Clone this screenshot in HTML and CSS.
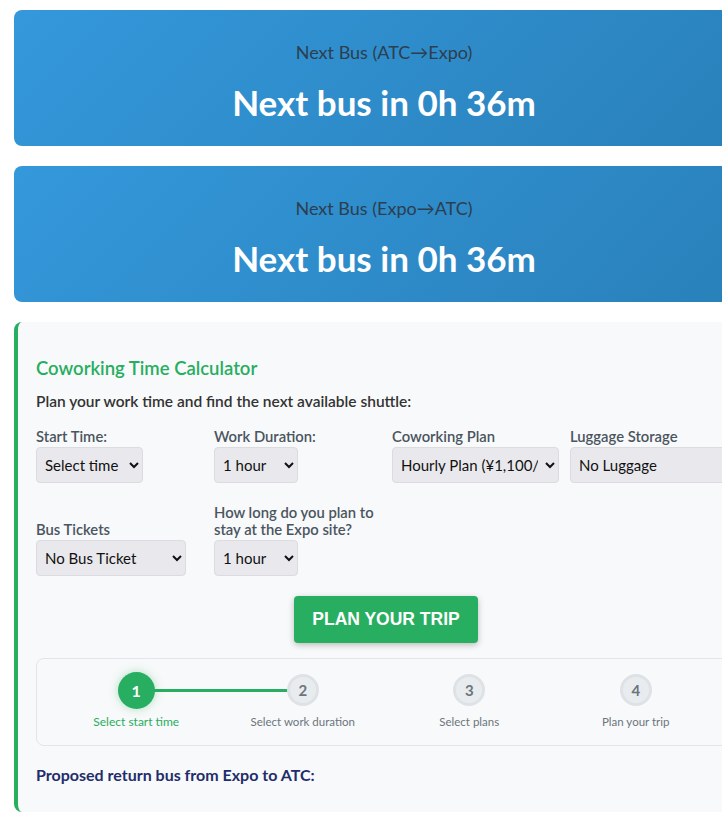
FILE: index.html
```html
<!DOCTYPE html>
<html lang="en">
<head>
<meta charset="utf-8">
<title>Expo Shuttle</title>
<link rel="stylesheet" href="styles.css">
</head>
<body>
<div class="container">
  <section class="bus-card">
    <div class="bus-title">Next Bus (ATC→Expo)</div>
    <div class="bus-time">Next bus in 0h 36m</div>
  </section>
  <section class="bus-card">
    <div class="bus-title">Next Bus (Expo→ATC)</div>
    <div class="bus-time">Next bus in 0h 36m</div>
  </section>

  <section class="calc-card">
    <h3 class="calc-title">Coworking Time Calculator</h3>
    <p class="calc-sub">Plan your work time and find the next available shuttle:</p>

    <div class="form-grid">
      <div class="field">
        <label class="field-label">Start Time:</label>
        <select class="sel w-time"><option>Select time</option></select>
      </div>
      <div class="field">
        <label class="field-label">Work Duration:</label>
        <select class="sel w-hour"><option>1 hour</option></select>
      </div>
      <div class="field">
        <label class="field-label">Coworking Plan</label>
        <select class="sel w-full"><option>Hourly Plan (¥1,100/hour)</option></select>
      </div>
      <div class="field">
        <label class="field-label">Luggage Storage</label>
        <select class="sel w-full"><option>No Luggage</option><option>Small Luggage Storage (¥500)</option></select>
      </div>
      <div class="field">
        <label class="field-label">Bus Tickets</label>
        <select class="sel w-ticket"><option>No Bus Ticket</option></select>
      </div>
      <div class="field">
        <label class="field-label">How long do you plan to stay at the Expo site?</label>
        <select class="sel w-hour"><option>1 hour</option></select>
      </div>
    </div>

    <div class="btn-row">
      <button class="plan-btn">PLAN YOUR TRIP</button>
    </div>

    <div class="steps">
      <div class="step active">
        <div class="connector"></div>
        <div class="circle">1</div>
        <div class="step-label">Select start time</div>
      </div>
      <div class="step">
        <div class="circle">2</div>
        <div class="step-label">Select work duration</div>
      </div>
      <div class="step">
        <div class="circle">3</div>
        <div class="step-label">Select plans</div>
      </div>
      <div class="step">
        <div class="circle">4</div>
        <div class="step-label">Plan your trip</div>
      </div>
    </div>

    <div class="return-title">Proposed return bus from Expo to ATC:</div>
  </section>
</div>
</body>
</html>
```

FILE: styles.css
```css
html, body {
  overflow: hidden;
}
body {
  margin: 0;
  background: #ffffff;
  font-family: "Lato", "Noto Sans", sans-serif;
  color: #333;
}
.container {
  width: 740px;
  padding: 10px 14px;
  display: flex;
  flex-direction: column;
  gap: 20px;
}
.bus-card {
  background: linear-gradient(135deg, #3498db 0%, #2980b9 100%);
  border-radius: 8px;
  padding: 30px 20px 24px;
  text-align: center;
  height: 136px;
  box-sizing: border-box;
}
.bus-title {
  font-size: 18px;
  line-height: 24px;
  color: #2c3e50;
}
.bus-time {
  margin-top: 18px;
  font-size: 35px;
  line-height: 40px;
  font-weight: 700;
  color: #ffffff;
}
.calc-card {
  background: #f8f9fa;
  border-left: 4px solid #27ae60;
  border-radius: 8px;
  padding: 34px 18px 26px;
}
.calc-title {
  margin: 0;
  font-size: 18.5px;
  line-height: 24px;
  font-weight: 600;
  color: #27ae60;
}
.calc-sub {
  margin: 10px 0 0;
  font-size: 15.5px;
  line-height: 22px;
  font-weight: 600;
  color: #333;
}
.form-grid {
  margin-top: 16px;
  display: grid;
  grid-template-columns: repeat(4, 166px);
  column-gap: 12px;
  row-gap: 21px;
  align-items: end;
}
.field {
  display: flex;
  flex-direction: column;
  align-items: flex-start;
}
.field-label {
  font-size: 14.8px;
  line-height: 17px;
  font-weight: 600;
  color: #4a5560;
  margin-bottom: 2px;
}
.sel {
  height: 36px;
  font-family: inherit;
  font-size: 15px;
  color: #111;
  background-color: #e9e9ed;
  border: 1px solid #dcdce0;
  border-radius: 4px;
  padding: 0 4px;
}
.w-time { width: 107px; }
.w-hour { width: 84px; }
.w-ticket { width: 150px; }
.w-full { width: 167px; }
.btn-row {
  display: flex;
  justify-content: center;
  margin-top: 20px;
}
.plan-btn {
  width: 184px;
  height: 47px;
  background: #27ae60;
  color: #fff;
  border: none;
  border-radius: 4px;
  font-family: "Liberation Sans", Arial, sans-serif;
  font-size: 17.5px;
  font-weight: 700;
  box-shadow: 0 2px 6px rgba(0, 0, 0, 0.25);
}
.steps {
  margin-top: 15px;
  border: 1px solid #e3e5e8;
  border-radius: 8px;
  padding: 13px 16px 15px;
  display: flex;
  background: #f8f9fa;
}
.step {
  flex: 1;
  position: relative;
  display: flex;
  flex-direction: column;
  align-items: center;
}
.circle {
  width: 32px;
  height: 32px;
  box-sizing: border-box;
  margin: 2px 0;
  border-radius: 50%;
  background: #e9ecef;
  border: 3px solid #dee2e6;
  color: #6c757d;
  font-size: 15px;
  font-weight: 700;
  display: flex;
  align-items: center;
  justify-content: center;
  position: relative;
  z-index: 1;
}
.step.active .circle {
  width: 37px;
  height: 37px;
  margin: 0;
  border: none;
  background: #27ae60;
  color: #fff;
  font-size: 16px;
  box-shadow: 0 0 10px rgba(39, 174, 96, 0.35);
}
.connector {
  position: absolute;
  top: 17px;
  left: 50%;
  width: 100%;
  height: 3px;
  background: #27ae60;
}
.step-label {
  margin-top: 6px;
  font-size: 11.5px;
  line-height: 16px;
  color: #6c757d;
}
.step.active .step-label {
  margin-top: 5px;
  font-size: 12px;
  color: #27ae60;
}
.return-title {
  margin-top: 18px;
  font-size: 16px;
  line-height: 22px;
  font-weight: 700;
  color: #1f2d6b;
}
```
